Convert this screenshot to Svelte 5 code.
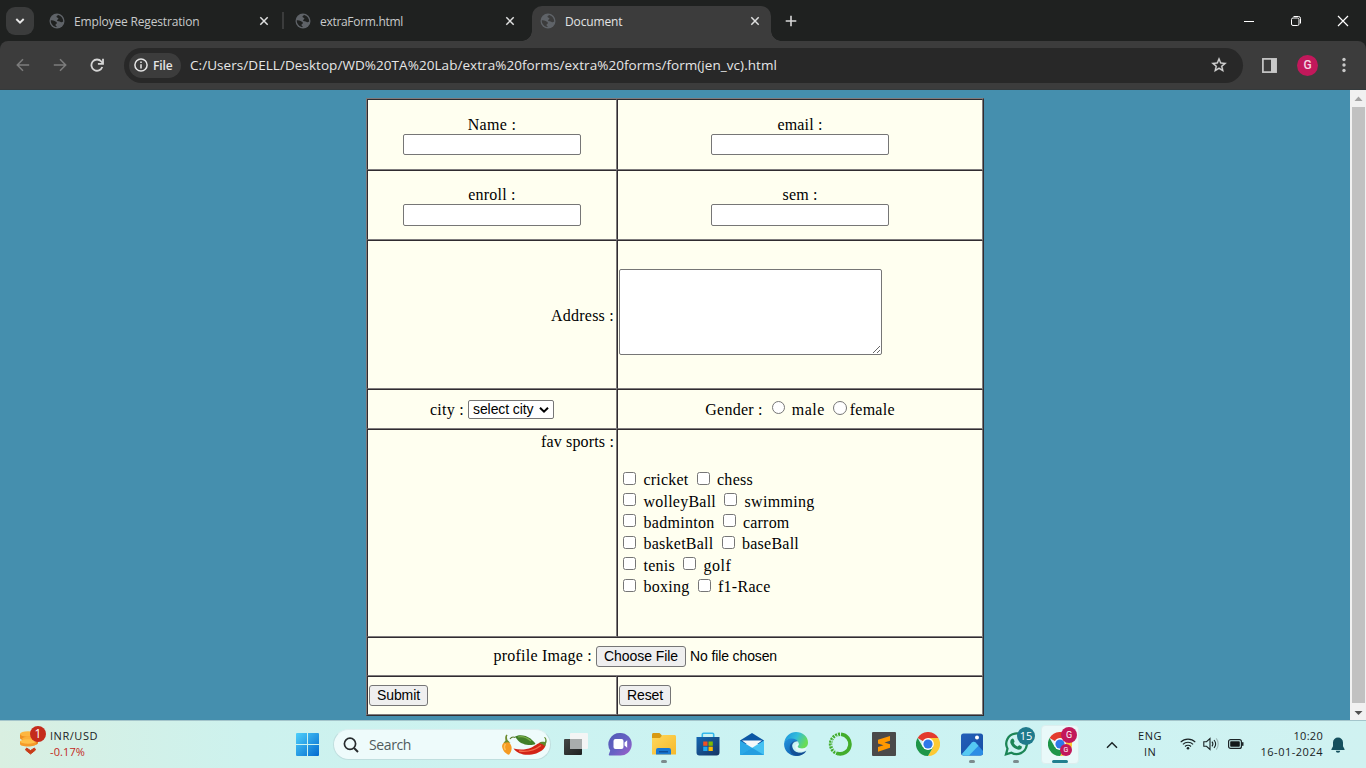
<script>
  // Spreads letters so a label takes exactly the given width.
  function fit(node, width) {
    const natural = node.getBoundingClientRect().width;
    node.style.letterSpacing = (width - natural) / node.textContent.length + 'px';
  }

  const tabs = [
    { title: 'Employee Regestration', w: 125.5 },
    { title: 'extraForm.html', w: 83 },
    { title: 'Document', w: 57.5, active: true }
  ];

  const sports = [
    [['cricket', 45], ['chess', 36]],
    [['wolleyBall', 72.5], ['swimming', 70]],
    [['badminton', 71], ['carrom', 46.5]],
    [['basketBall', 70], ['baseBall', 57]],
    [['tenis', 31.5], ['golf', 28]],
    [['boxing', 46], ['f1-Race', 52.5]]
  ];
</script>

{#snippet globe()}
  <svg class="globe" width="16" height="16" viewBox="0 0 16 16">
    <circle cx="8" cy="8" r="7.5" fill="#5f6368" />
    <path fill="var(--gap)" d="M9.3 1.9c-1.3.8-2.1 1.2-1.7 2.1.4.8 1.7.4 1.8 1.5 0 1-1.4 1.2-1.4 2.1.2 1 2.700.5 3.600 1.300.7.7 1.600.3 2.600-.3.1-3.300-1.800-5.800-4.900-6.700zM1.800 7.300c1.300-.1 2.800 0 3.900.8.900.7 2.100.9 2.200 1.900 0 .8-1.300 1-1.400 1.900 0 .7.8 1.200 1.600 2.200-3.600 0-6.500-2.900-6.300-6.800z" />
  </svg>
{/snippet}

{#snippet cross()}
  <svg class="cross" width="10" height="10" viewBox="0 0 10 10"><path d="M1.300 1.300l7.400 7.400M8.700 1.300l-7.400 7.400" stroke="#dfe0e0" stroke-width="1.500" /></svg>
{/snippet}

{#snippet chromeLogo()}
  <svg width="24" height="24" viewBox="0 0 24 24">
    <path d="M12 12L1.600 6A12 12 0 0 1 22.400 6z" fill="#e33b2e" />
    <path d="M12 12V6h10.400A12 12 0 0 1 12 24l5.200-9z" fill="#fcc934" />
    <path d="M12 12l5.200 3L12 24A12 12 0 0 1 1.600 6l5.200 9z" fill="#1e9648" />
    <circle cx="12" cy="12" r="5.900" fill="#fff" />
    <circle cx="12" cy="12" r="4.600" fill="#2f78e8" />
  </svg>
{/snippet}

<div class="screen">
  <header>
    <div class="strip">
      <div class="tabsearch">
        <svg width="10" height="8" viewBox="0 0 10 8"><path d="M1.300 2l3.700 3.700L8.700 2" fill="none" stroke="#e8e8e8" stroke-width="1.900" /></svg>
      </div>
      {#each tabs as tab}
        <div class="tab" class:active={tab.active}>
          {@render globe()}
          <span class="title"><span class="fit" use:fit={tab.w}>{tab.title}</span></span>
          {@render cross()}
        </div>
      {/each}
      <svg class="plus" width="12" height="12" viewBox="0 0 12 12"><path d="M6 .7v10.600M.7 6h10.600" stroke="#d8d8d8" stroke-width="1.600" /></svg>
      <div class="window">
        <svg width="12" height="12" viewBox="0 0 12 12"><path d="M1 6.500h10" stroke="#fff" /></svg>
        <svg width="12" height="12" viewBox="0 0 12 12" fill="none" stroke="#fff"><rect x="1.500" y="3" width="7.500" height="7.500" rx="1.500" /><path d="M3.500 1.500h5a2 2 0 0 1 2 2v5" /></svg>
        <svg width="12" height="12" viewBox="0 0 12 12"><path d="M1 1l10 10M11 1L1 11" stroke="#fff" stroke-width="1.200" /></svg>
      </div>
    </div>
    <div class="toolbar">
      <svg width="14" height="14" viewBox="0 0 14 14" fill="none" stroke="#7c7c7c" stroke-width="1.500"><path d="M13.200 7H1.500M7 1.300L1.300 7 7 12.700" /></svg>
      <svg class="fwd" width="14" height="14" viewBox="0 0 14 14" fill="none" stroke="#7c7c7c" stroke-width="1.500"><path d="M.8 7h11.700M7 1.300L12.700 7 7 12.700" /></svg>
      <svg class="reload" width="14" height="14" viewBox="0 0 14 14" fill="none" stroke="#d5d5d5" stroke-width="1.800"><path d="M12.300 9A5.600 5.600 0 1 1 11.300 3.500L12.600 5" /><path d="M13 .8v5.100H7.900" /></svg>
      <div class="omnibox">
        <div class="chip">
          <svg width="14" height="14" viewBox="0 0 14 14"><circle cx="7" cy="7" r="6.100" fill="none" stroke="#e6e6e6" stroke-width="1.500" /><path d="M7 6.200v4.200M7 3.400v1.600" stroke="#e6e6e6" stroke-width="1.500" /></svg>
          <span class="fit" use:fit={19.500}>File</span>
        </div>
        <div class="url"><span class="fit" use:fit={587}>C:/Users/DELL/Desktop/WD%20TA%20Lab/extra%20forms/extra%20forms/form(jen_vc).html</span></div>
        <svg class="star" width="18" height="18" viewBox="0 0 24 24" fill="#d5d5d5"><path d="M22 9.240l-7.190-.62L12 2 9.190 8.630 2 9.240l5.460 4.730L5.820 21 12 17.270 18.180 21l-1.630-7.030L22 9.240zM12 15.400l-3.760 2.270 1-4.280-3.320-2.880 4.380-.38L12 6.100l1.710 4.040 4.380.38-3.320 2.880 1 4.280L12 15.400z" stroke="#d5d5d5" stroke-width=".4" /></svg>
      </div>
      <svg class="panel" width="15" height="15" viewBox="0 0 15 15"><rect x="0.900" y="0.900" width="13.200" height="13.200" fill="none" stroke="#c9c9c9" stroke-width="1.700" /><rect x="9" y="1" width="5" height="13" fill="#c9c9c9" /></svg>
      <div class="avatar">G</div>
      <svg class="dots" width="4" height="16" viewBox="0 0 4 16" fill="#c9c9c9"><circle cx="2" cy="2.500" r="1.700" /><circle cx="2" cy="8" r="1.700" /><circle cx="2" cy="13.500" r="1.700" /></svg>
    </div>
  </header>

  <main>
    <div class="page">
      <form class="table">
        <div class="cell field"><span class="fit" use:fit={48.500}>Name :</span><input type="text" /></div>
        <div class="cell field"><span class="fit" use:fit={45}>email :</span><input type="text" /></div>
        <div class="cell field low"><span class="fit" use:fit={47.500}>enroll :</span><input type="text" /></div>
        <div class="cell field low"><span class="fit" use:fit={35}>sem :</span><input type="text" /></div>
        <div class="cell address"><span class="fit" use:fit={63}>Address :</span></div>
        <div class="cell area"><textarea></textarea></div>
        <div class="cell city">
          <span class="fit" use:fit={34}>city :</span>
          <div class="select"><span class="fit" use:fit={60.500}>select city</span><svg width="10" height="8" viewBox="0 0 10 8"><path d="M1 1.700l4 4 4-4" fill="none" stroke="#000" stroke-width="2" /></svg></div>
        </div>
        <div class="cell gender">
          <span class="fit" use:fit={57.500}>Gender :</span><i class="radio male"></i><span class="fit" use:fit={33}>male</span><i class="radio female"></i><span class="fit" use:fit={45}>female</span>
        </div>
        <div class="cell fav"><span class="fit" use:fit={73}>fav sports :</span></div>
        <div class="cell sports">
          {#each sports as row}
            <div class="row">
              {#each row as [name, w]}
                <i class="check"></i><span class="fit" use:fit={w}>{name}</span>
              {/each}
            </div>
          {/each}
        </div>
        <div class="cell wide">
          <span class="fit profile" use:fit={98.500}>profile Image :</span>
          <div class="button"><span class="fit" use:fit={74}>Choose File</span></div>
          <span class="ui fit" use:fit={87}>No file chosen</span>
        </div>
        <div class="cell act"><div class="button"><span class="fit" use:fit={43}>Submit</span></div></div>
        <div class="cell act"><div class="button"><span class="fit" use:fit={36}>Reset</span></div></div>
      </form>
    </div>
    <div class="scroll">
      <svg width="16" height="17" viewBox="0 0 16 17"><path d="M4.500 11L8.500 6.500 12.500 11z" fill="#a3a3a3" /></svg>
      <div class="thumb"></div>
      <svg width="16" height="17" viewBox="0 0 16 17"><path d="M4.500 8L8.500 12 12.500 8z" fill="#505050" /></svg>
    </div>
  </main>

  <footer>
    <div class="widget">
      <div class="coins">
        <svg width="22" height="26" viewBox="0 0 22 26">
          <path d="M1 4v4c0 1.500 3 2.500 7 2.500s9-1 9-2.500V4z" fill="#ef9021" /><ellipse cx="9" cy="4" rx="8" ry="2.800" fill="#fdb640" />
          <path d="M3 9v4c0 1.500 3 2.500 8 2.500s8-1 8-2.500V9z" fill="#e8821c" /><ellipse cx="11" cy="9" rx="8" ry="2.500" fill="#fbb03a" />
          <path d="M1 11v3c0 1.500 3 2.500 8 2.500s8-1 8-2.500v-3z" fill="#f59b2a" /><ellipse cx="9" cy="11.500" rx="8" ry="2.200" fill="#ffc04a" />
          <path d="M7.500 18l4 2.500 4-2.500 1 2-5 4-5-4z" fill="#c83c18" stroke="#c83c18" stroke-linejoin="round" />
        </svg>
        <b>1</b>
      </div>
      <div class="rate"><span class="fit" use:fit={48}>INR/USD</span><span class="fit red" use:fit={35}>-0.17%</span></div>
    </div>
    <svg class="win" width="23" height="23" viewBox="0 0 23 23">
      <defs><linearGradient id="w" gradientUnits="userSpaceOnUse" x1="0" y1="0" x2="23" y2="23"><stop offset="0" stop-color="#4fd0fb" /><stop offset="1" stop-color="#0269cf" /></linearGradient></defs>
      <path fill="url(#w)" d="M1 0h10v11H0V1a1 1 0 0 1 1-1zM12 0h10a1 1 0 0 1 1 1v10H12zM0 12h11v11H1a1 1 0 0 1-1-1zM12 12h11v10a1 1 0 0 1-1 1H12z" />
    </svg>
    <div class="search">
      <svg width="16" height="16" viewBox="0 0 16 16" fill="none" stroke="#272b2d"><circle cx="7" cy="6.800" r="5.600" stroke-width="1.700" /><path d="M11 11l4 4" stroke-width="2" /></svg>
      <span><span class="fit" use:fit={42}>Search</span></span>
      <svg width="46" height="24" viewBox="0 0 46 24">
        <path d="M5 8.500C2 9.500.5 12 1.300 14.500 2 18 5 21 8 21.800c2-2 3-5 2.500-8C10 11 8 8.500 6 8z" fill="#f59a22" />
        <path d="M4.500 11C3 13 3 15 4.500 17" stroke="#ffc15a" stroke-width="1.500" fill="none" />
        <path d="M2.500 10l2-2.500C4 5 4 3 5.500 1.500l1 .8C5.500 4 6 5.500 6.500 7l3 3-3-.8z" fill="#6d8b2e" />
        <path d="M13.500 4c4-3 11-2 16 1.500 2 2 4 3.500 5 5.500-5 2.500-14 .5-17.500-3.500-1-1-2-3-3.500-3.500z" fill="#417f28" />
        <path d="M17 4c5-1.500 9 .5 13 4" stroke="#79ad4a" stroke-width="1.300" fill="none" />
        <path d="M14 4.500c-2-1-4 0-5 1.500" stroke="#587a2a" stroke-width="1.200" fill="none" />
        <path d="M12.500 15.500c6 1.500 12 1.500 18-1 4-2 7.500-5.500 12-5.500 3 1.500 2.500 4.500 0 7-4 4-10 5.800-16 5.800-6 0-11-2.300-14-6.300z" fill="#d32316" />
        <path d="M18 18c8 1.200 16-1 22-5.500" stroke="#f36a4b" stroke-width="1.300" fill="none" />
        <path d="M38 10c2-1.500 4-1.500 6-1 .5-2 .5-3-1-4.500l1-.5c2 2 2 4.500 1 6.500l-1 3-2-2z" fill="#5e8a2f" />
      </svg>
    </div>

    <div class="apps">
      <div class="app"><svg width="24" height="22" viewBox="0 0 24 22"><defs><linearGradient id="tv" x1="0" y1="0" x2="1" y2="1"><stop offset="0" stop-color="#444746" /><stop offset="1" stop-color="#1e2020" /></linearGradient></defs><rect y="6" width="18" height="16" rx="1" fill="url(#tv)" /><rect x="6" width="18" height="16" rx="1" fill="#f4f5f5" /><rect x="6" y="6" width="12" height="10" fill="#a9adad" /></svg></div>
      <div class="app"><svg width="24" height="24" viewBox="0 0 24 24"><defs><linearGradient id="ch" x1="0" y1="0" x2="1" y2="1"><stop offset="0" stop-color="#5059b5" /><stop offset=".55" stop-color="#6862c4" /><stop offset="1" stop-color="#a55fca" /></linearGradient></defs><path d="M12 1a11.300 11.300 0 1 1-1 22.500H1.500c-.6 0-.9-.5-.7-1l1.400-4A11.400 11.400 0 0 1 12 1z" fill="url(#ch)" /><rect x="5.500" y="7" width="10" height="10" rx="2" fill="#fff" /><path d="M16.500 10.500l2.700-2.300v7.600l-2.700-2.300z" fill="#fff" /></svg></div>
      <div class="app run"><svg width="24" height="22" viewBox="0 0 24 22"><defs><linearGradient id="fo" x1="0" y1="0" x2="1" y2="1"><stop offset="0" stop-color="#ffd85c" /><stop offset="1" stop-color="#f6b92b" /></linearGradient></defs><path d="M0 1.500C0 .6.600 0 1.500 0h6l2.500 2.500V9H0z" fill="#d89a13" /><path d="M0 5h8l2.500-3H22.500c.9 0 1.500.6 1.500 1.500V21.500H0z" fill="url(#fo)" /><path d="M4 21.500v-4.500a2 2 0 0 1 2-2h11a2 2 0 0 1 2 2v4.500z" fill="#1978d2" /><rect x="7" y="18" width="9" height="1.500" fill="#0c4f9c" /></svg></div>
      <div class="app"><svg width="24" height="24" viewBox="0 0 24 24"><defs><linearGradient id="st" x1="0" y1="0" x2="1" y2="1"><stop offset="0" stop-color="#1467b3" /><stop offset="1" stop-color="#183461" /></linearGradient></defs><path d="M6.300 6V2.500C6.300 1.700 6.800 1.200 7.500 1.200h9c.7 0 1.200.5 1.200 1.300V6" fill="none" stroke="#35b8ec" stroke-width="1.600" /><path d="M0.500 5h23v15.500A3 3 0 0 1 20.500 23.500h-17a3 3 0 0 1-3-3z" fill="url(#st)" /><path d="M7.200 9.500h4.300v4.300H7.200z" fill="#f25022" /><path d="M12.500 9.500h4.300v4.300h-4.300z" fill="#7fba00" /><path d="M7.200 14.700h4.300V19H7.200z" fill="#21a7ef" /><path d="M12.500 14.700h4.300V19h-4.300z" fill="#ffb900" /></svg></div>
      <div class="app"><svg width="24" height="24" viewBox="0 0 24 24"><path d="M0 8.500L12 1l12 7.500V12H0z" fill="#0c57a4" /><path d="M2 8.500h20L12 16z" fill="#f5f8fa" /><path d="M0 8.500l24 14.500H0z" fill="#2ba8e6" /><path d="M24 8.500L12 16 0 23h24z" fill="#45c1f2" /><path d="M12 15.800L24 23H0z" fill="#249ee0" /></svg></div>
      <div class="app"><svg width="24" height="24" viewBox="0 0 24 24"><defs><linearGradient id="e1" x1="0" y1="0" x2="1" y2=".4"><stop offset="0" stop-color="#1b91de" /><stop offset=".55" stop-color="#32bddb" /><stop offset="1" stop-color="#69dc56" /></linearGradient><linearGradient id="e2" x1="0" y1="0" x2="1" y2="1"><stop offset="0" stop-color="#2294df" /><stop offset="1" stop-color="#0b4e9d" /></linearGradient></defs><path d="M0.300 10.500C1.200 4.500 6 0 12 0c6.500 0 12 4.500 12 10.500 0 4-3 6-6.500 6-2.500 0-4-1-4-1.700 0-.6 1.200-1 1.200-3C14.700 9 11.500 7 8 7 4 7 1.500 8.500.300 10.500z" fill="url(#e1)" /><path d="M.1 11.500C.8 8 4 6.500 7.500 6.500c3 0 5.500 1 6.700 3C9.500 8.500 8 11.500 8.200 14c.3 5 5.800 8.500 11.300 6.500l2.800-1.200C20 22.500 16 24 12 24 5 24-.4 18 .1 11.500z" fill="url(#e2)" /><path d="M13.500 9.500c-4 0-6 3-5.300 6 1 4.500 7.800 7 14.100 3.300-2.800 4.500-8 5.500-10 5-5-1-7-5-6.500-9 .5-4 4-6 7.700-5.300z" fill="#134a8d" opacity=".75" /><path d="M14.700 11.500c.3 1.500-1.200 2.500-1.200 3.300 0 1 1.800 1.900 4.500 1.900 2 0 3.700-.5 4.800-1.700-.2 1.500-1 2.800-2 3.500-4 2-9.500.5-9.500-4 0-1.500 1.600-3 3.400-3z" fill="#e8f7f8" /></svg></div>
      <div class="app"><svg width="24" height="24" viewBox="0 0 24 24" fill="none" stroke="#43ad2c"><path d="M13 2.300a9.800 9.800 0 1 1-3.500 19.200" stroke-width="3.600" /><path d="M10 21.700A9.900 9.900 0 0 1 12.500 2.200" stroke-width="3.400" stroke-dasharray="2 .9" /><path d="M8 19.500A8.400 8.400 0 0 1 11 3.600" stroke="#cef3f1" stroke-width="1" stroke-dasharray="1.500 2" /></svg></div>
      <div class="app"><svg width="24" height="24" viewBox="0 0 24 24"><rect width="24" height="24" rx="1" fill="#4a4a4a" /><path d="M6 7.800L18 4v4.800L12.500 10.600 18 12.200v3.600L6 19.800V15l5.500-1.800L6 11.600z" fill="#ff9800" /></svg></div>
      <div class="app">{@render chromeLogo()}</div>
      <div class="app run"><svg width="23" height="23" viewBox="0 0 23 23"><defs><linearGradient id="ph" x1="0" y1="0" x2="1" y2="1"><stop offset="0" stop-color="#235fb9" /><stop offset="1" stop-color="#174ea4" /></linearGradient></defs><rect width="22" height="22" y=".5" rx="2.500" fill="url(#ph)" /><path d="M1 21L11 9.500c1-1 2.500-1 3.500 0L22 18v2c0 1.700-1.300 2.500-3 2.500h-16C2 22.500 1.500 22 1 21z" fill="#2b8de5" /><path d="M1 21L11 9.500c1-1 2.500-1 3.500 0l3 3.200L8 22.500H3.500C2.500 22.500 1.500 22 1 21z" fill="#55c9f2" /><circle cx="16" cy="4.500" r="2" fill="#fff" /></svg></div>
      <div class="app run wa"><svg width="24" height="24" viewBox="0 0 24 24"><path d="M2 22.300l1.500-5.600a10.300 10.300 0 1 1 3.900 4z" fill="none" stroke="#1c8556" stroke-width="2.300" /><path d="M8.500 6.500c.6 0 1 .2 1.200.8l.8 2c.2.600-.8 1.500-.8 1.800.8 1.600 2 2.600 3.800 3.400.5 0 1.200-1.500 1.800-1.300l2.200 1.100c.8.400.2 2-.4 2.600-1.300 1.100-3 1-4.800.2-2.800-1.200-4.800-3.500-5.800-5.900-.7-2 .4-4.200 2-4.700z" fill="#1c8556" /></svg><b>15</b></div>
      <div class="app on">{@render chromeLogo()}<b>G</b><b class="small">G</b></div>
    </div>

    <svg class="up" width="12" height="8" viewBox="0 0 12 8"><path d="M1 6.700L6 1.700l5 5" fill="none" stroke="#1b2426" stroke-width="1.500" /></svg>
    <div class="lang"><span class="fit" use:fit={24}>ENG</span><span class="fit" use:fit={12}>IN</span></div>
    <svg class="wifi" width="16" height="13" viewBox="0 0 16 13" fill="none" stroke="#1b2426" stroke-width="1.100"><path d="M.7 5.200a10.300 10.300 0 0 1 14.600 0M2.900 7.400a7.200 7.200 0 0 1 10.200 0M5 9.500a4.200 4.200 0 0 1 6 0" /><circle cx="8" cy="11.200" r="1.300" fill="#1b2426" stroke="none" /></svg>
    <svg class="vol" width="17" height="14" viewBox="0 0 17 14" fill="none" stroke="#1b2426" stroke-width="1.100"><path d="M.8 4.700h2.700L7 1.500v11L3.500 9.300H.8z" /><path d="M9 4.700c1 1.300 1 3.300 0 4.600M11 3c1.900 2.300 1.900 5.700 0 8" /><path d="M13.200 1.300c2.700 3.300 2.700 8.100 0 11.400" stroke="#9db8b8" /></svg>
    <svg class="bat" width="16" height="10" viewBox="0 0 16 10"><rect x=".6" y=".6" width="12.800" height="8.800" rx="2" fill="none" stroke="#1b2426" stroke-width="1.200" /><rect x="2.200" y="2.200" width="9.600" height="5.600" rx=".8" fill="#14191a" /><path d="M14.700 3.200v3.600" stroke="#1b2426" stroke-width="1.600" /></svg>
    <div class="clock"><span class="fit" use:fit={29.500}>10:20</span><span class="fit" use:fit={62.500}>16-01-2024</span></div>
    <svg class="bell" width="14" height="16" viewBox="0 0 14 16" fill="#15505e"><path d="M7 .5a5 5 0 0 1 5 5v3.700l1.600 3c.2.500 0 .8-.5.800H.9c-.5 0-.7-.4-.5-.8l1.600-3V5.500a5 5 0 0 1 5-5zM4.800 13.800h4.400a2.200 2 0 0 1-4.400 0z" /></svg>
  </footer>
</div>

<style>
  :global(body) { margin: 0; overflow: hidden; }
  .screen { width: 1366px; height: 768px; display: flex; flex-direction: column; font-family: "Open Sans", "Noto Sans", sans-serif; overflow: hidden; }
  .screen, .screen * { box-sizing: border-box; }
  svg { display: block; flex: none; }
  .fit { display: inline-block; white-space: nowrap; flex: none; }

  header { height: 90px; background: #1f2120; flex: none; border-bottom: 1px solid #343a3c; }
  .strip { height: 41px; display: flex; align-items: center; }
  .tabsearch { width: 28px; height: 28px; margin: 0 8px 0 6px; border-radius: 9px; background: #3b3c3c; display: grid; place-items: center; flex: none; }
  .tab { --gap: #1f2120; width: 245px; height: 35px; margin-top: 6px; padding: 0 0 6px 7px; display: flex; align-items: center; position: relative; flex: none; color: #c8cacb; font-size: 12px; }
  .tab + .tab { padding-left: 8px; }
  .tab + .tab::before { content: ""; position: absolute; left: -5px; top: 6px; width: 2px; height: 17px; background: #3b3c3c; }
  .tab .title { margin-left: 9px; width: 184.500px; padding-top: 3px; line-height: 18px; }
  .tab.active { --gap: #3c3c3c; width: 239px; margin-right: 14px; background: #3c3c3c; border-radius: 10px 10px 0 0; color: #e3e4e4; }
  .tab.active::before { width: 10px; height: 10px; left: -10px; top: auto; bottom: 0; background: radial-gradient(circle at 0 0, transparent 9.500px, #3c3c3c 10px); }
  .tab.active::after { content: ""; position: absolute; width: 10px; height: 10px; right: -10px; bottom: 0; background: radial-gradient(circle at 100% 0, transparent 9.500px, #3c3c3c 10px); }
  .window { display: flex; gap: 35px; margin-left: auto; margin-right: 17px; padding-top: 1px; }

  .toolbar { height: 48px; background: #3c3c3c; border-radius: 8px 8px 0 0; display: flex; align-items: center; padding-left: 16px; }
  .fwd { margin-left: 23px; }
  .reload { margin-left: 23px; }
  .omnibox { width: 1119px; height: 35px; margin-left: 20px; border-radius: 18px; background: #282828; display: flex; align-items: center; padding-left: 5px; }
  .chip { width: 52px; height: 25px; border-radius: 13px; background: #3c3c3c; display: flex; align-items: center; gap: 5px; padding-left: 5px; font-size: 12px; font-weight: 600; color: #e6e6e6; }
  .url { margin-left: 9px; width: 1020px; font-size: 13.500px; line-height: 20px; color: #e6e6e6; }
  .panel { margin-left: 19px; }
  .avatar { width: 21px; height: 21px; border-radius: 50%; background: #c2185b; color: #f6d5e2; font: 500 12px/21px Roboto, sans-serif; text-align: center; margin-left: 20px; }
  .dots { margin-left: 24px; }

  main { height: 630px; display: flex; flex: none; background: #458fae; }
  .page { width: 1350px; padding: 8px 0 0 366px; background: #458fae; }
  .table { display: grid; grid-template-columns: 250px 366px; grid-template-rows: 71px 70px 149px 40px 208px 39px 39px; width: 618px; height: 618px; margin: 0; border: 1px solid; border-color: #80797a #302c30 #302c30 #80797a; font: 16px/18px "Liberation Serif", "Times New Roman", serif; color: #000; }
  .cell { background: #fffff0; border: 1px solid; border-color: #302c30 #7f7c7d #7f7c7d #302c30; display: flex; }
  .field { flex-direction: column; align-items: center; padding-top: 16px; }
  .field.low { padding-top: 15px; }
  input { width: 178px; height: 21px; margin: 0; padding: 0; border: 1px solid #767676; border-radius: 2px; background: #fff; flex: none; }
  .low input { height: 22px; }
  .address { justify-content: flex-end; align-items: center; padding: 2px 2px 0 0; }
  .area { padding: 28px 0 0 1px; }
  textarea { width: 263px; height: 86px; margin: 0; border: 1px solid #767676; border-radius: 2px; background: #fff; resize: both; padding: 2px; }
  .city { justify-content: center; align-items: center; gap: 4px; }
  .city > .fit, .gender .fit { padding-top: 1px; }
  .select { width: 86px; height: 19px; margin-top: 1px; border: 1px solid #767676; border-radius: 2px; background: #fff; display: flex; align-items: center; padding-left: 4px; gap: 5px; font: 14px/17px "Liberation Sans", Arial, sans-serif; }
  .gender { justify-content: center; align-items: center; }
  .radio { width: 13px; height: 13px; border: 1px solid #767676; border-radius: 50%; background: #fff; margin-top: -3px; flex: none; }
  .male { margin-right: 7px; margin-left: 9px; }
  .female { margin: -3px 3px 0 8px; width: 14px; height: 14px; }
  .fav { justify-content: flex-end; padding: 3px 2px 0 0; }
  .sports { flex-direction: column; padding: 39px 0 0 5px; }
  .row { display: flex; height: 21.400px; align-items: center; flex: none; }
  .check { width: 13px; height: 13px; border: 1px solid #767676; border-radius: 2.500px; background: #fff; margin: -3px 7.500px 0 0; flex: none; }
  .row .fit { margin-right: 8px; padding-top: 1px; }
  .wide { grid-column: span 2; align-items: center; padding-left: 125.500px; gap: 4px; }
  .profile { margin-top: -1px; }
  .button { height: 21px; padding: 0 7px; border: 1px solid #767676; border-radius: 3px; background: #efefef; font: 14px/19px "Liberation Sans", Arial, sans-serif; }
  .ui { font: 14px/18px "Liberation Sans", Arial, sans-serif; margin-top: -2px; }
  .act { align-items: center; padding-left: 1px; }

  .scroll { width: 16px; background: #f1f1f1; display: flex; flex-direction: column; }
  .thumb { flex: 1; margin: 0 0 0 2px; width: 13px; background: #c1c1c1; }

  footer { height: 48px; flex: none; display: flex; align-items: center; border-top: 1px solid #a4c5cb; background: linear-gradient(90deg, #d9efe1, #cdf2ee 18%, #cbf3f3 60%, #d0f2f1); font-size: 11px; line-height: 16px; color: #182224; }
  .widget { width: 296px; padding-left: 19px; display: flex; align-items: center; }
  .coins { width: 31px; height: 28px; position: relative; padding-top: 1px; margin-top: -3px; }
  .coins b { position: absolute; left: 11px; top: -3px; width: 16px; height: 16px; border-radius: 50%; background: #c42b1c; color: #fff; font-weight: 400; font-size: 12px; text-align: center; line-height: 15.500px; }
  .rate, .lang, .clock { display: flex; flex-direction: column; align-items: flex-start; margin-top: -1px; }
  .red { color: #c3281c; }
  .search { width: 218px; height: 31px; margin: 0 3px 0 14px; border-radius: 16px; background: #eefbfb; border: 1px solid #c0dfdf; border-top-color: #dcefef; display: flex; align-items: center; padding-left: 9px; }
  .search > span { margin-left: 10px; width: 132px; font-size: 14px; line-height: 18px; color: #505b5d; }
  .apps { display: flex; }
  .app { width: 44px; height: 47px; display: grid; place-items: center; position: relative; }
  .app > :global(svg) { margin-top: -1px; }
  .run::after { content: ""; position: absolute; left: 19px; bottom: 5px; width: 6px; height: 3px; border-radius: 2px; background: #7b8b8d; }
  .on::before { content: ""; position: absolute; inset: 4px 3px 4px 3px; border-radius: 4px; background: #e9f9f9; border: 1px solid #dceeee; }
  .on::after { content: ""; position: absolute; left: 14px; bottom: 5px; width: 16px; height: 3px; border-radius: 2px; background: #20808f; }
  .on > :global(svg) { position: relative; }
  .app b { position: absolute; left: 23px; top: 6px; width: 18px; height: 18px; border-radius: 50%; background: #1f7a8c; color: #fff; font-weight: 400; font-size: 11px; line-height: 17px; text-align: center; }
  .on b { left: 23px; top: 6px; width: 16px; height: 16px; background: #c2185b; font: 9px/16px Roboto, sans-serif; }
  .on b.small { left: 22px; top: 23px; width: 12px; height: 12px; font-size: 7px; line-height: 12px; }
  .up { margin-left: 24px; }
  .lang { align-items: center; width: 24px; margin-left: 20px; }
  .wifi { margin: -2px 0 0 18px; }
  .vol { margin: -1px 0 0 7px; }
  .bat { margin: -1px 0 0 8px; }
  .clock { align-items: flex-end; margin-left: auto; margin-top: -2px; }
  .bell { margin: 0 21px 0 8px; }
</style>
